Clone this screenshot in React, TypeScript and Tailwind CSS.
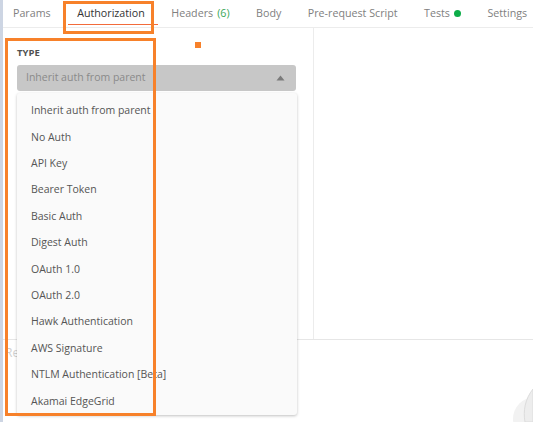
import React from 'react';

const tabs = [
  { label: 'Params' },
  { label: 'Authorization', active: true },
  { label: 'Headers', count: '(6)' },
  { label: 'Body' },
  { label: 'Pre-request Script' },
  { label: 'Tests', dot: true },
  { label: 'Settings' },
];

const authTypes = [
  'Inherit auth from parent',
  'No Auth',
  'API Key',
  'Bearer Token',
  'Basic Auth',
  'Digest Auth',
  'OAuth 1.0',
  'OAuth 2.0',
  'Hawk Authentication',
  'AWS Signature',
  'NTLM Authentication [Beta]',
  'Akamai EdgeGrid',
];

const App = () => {
  return (
    <div
      className="relative w-[533px] h-[422px] overflow-hidden bg-white flex"
      style={{ fontFamily: '"Open Sans", "Noto Sans", sans-serif' }}
    >
      {/* Left window edge */}
      <div className="w-[3px] shrink-0 bg-[#cdd5e3]" />

      <div className="flex-1 flex flex-col">
        {/* Tabs */}
        <div className="h-[28px] shrink-0 flex items-center border-b border-[#ececec] text-[10.7px] text-[#808080] pl-[10px] whitespace-nowrap">
          <div className="flex gap-[26.5px] items-center">
            {tabs.map((tab) => (
              <div
                key={tab.label}
                className={`relative flex items-center h-[28px] ${tab.active ? 'text-[#333333]' : ''}`}
              >
                <span>{tab.label}</span>
                {tab.count && <span className="ml-[4px] text-[#3aa757]">{tab.count}</span>}
                {tab.dot && <span className="ml-[4px] w-[7px] h-[7px] rounded-full bg-[#0cad48]" />}
                {tab.active && (
                  <div className="absolute left-[-9px] right-[-13px] bottom-[3px] h-[1px] bg-[#f26b3a]" />
                )}
              </div>
            ))}
          </div>
        </div>

        {/* Body */}
        <div className="h-[312px] shrink-0 flex border-b border-[#e6e6e6]">
          <div className="w-[311px] shrink-0 border-r border-[#ececec] pl-[14px] pt-[20px]">
            <div className="text-[9.5px] font-bold text-[#505050] leading-none">TYPE</div>
            <div className="mt-[7px] w-[279px] h-[26px] rounded-[3px] bg-[#c7c7c7] flex items-center justify-between px-[9px] text-[10.5px] text-[#8a8a8a]">
              <span>Inherit auth from parent</span>
              <svg width="9" height="6" viewBox="0 0 9 6" className="mr-[2px]">
                <path d="M4.5 0.5 L8.5 5.5 L0.5 5.5 Z" fill="#7a7a7a" />
              </svg>
            </div>
          </div>
          <div className="flex-1" />
        </div>

        <div className="flex-1 pl-[2px] pt-[4px] text-[12px] text-[#d0d0d0]">Re</div>
      </div>

      {/* Dropdown menu */}
      <div className="absolute left-[17px] top-[93px] w-[280px] h-[322px] bg-[#fafafa] rounded-[3px] shadow-[0_1px_3px_rgba(0,0,0,0.25)] pt-[5px]">
        {authTypes.map((t) => (
          <div key={t} className="h-[26.4px] flex items-center pl-[14px] text-[10.5px] text-[#555555] whitespace-nowrap">
            {t}
          </div>
        ))}
      </div>

      {/* Rocket illustration fragment */}
      <svg className="absolute left-[505px] top-[383px]" width="28" height="39" viewBox="0 0 28 39">
        <circle cx="30" cy="36" r="22" fill="#f2f2f2" />
        <path d="M20 39 C18 28 20 16 28 6 L28 39 Z" fill="#ededed" stroke="#dcdcdc" strokeWidth="1" />
      </svg>

      {/* Annotation marks */}
      <div className="absolute left-[63px] top-[1px] w-[91px] h-[33px] border-[3px] border-[#f7812a]" />
      <div className="absolute left-[5px] top-[38px] w-[151px] h-[378px] border-[3px] border-[#f7812a]" />
      <div className="absolute left-[195px] top-[42px] w-[6px] h-[6px] bg-[#f7812a]" />
    </div>
  );
};

export default App;
